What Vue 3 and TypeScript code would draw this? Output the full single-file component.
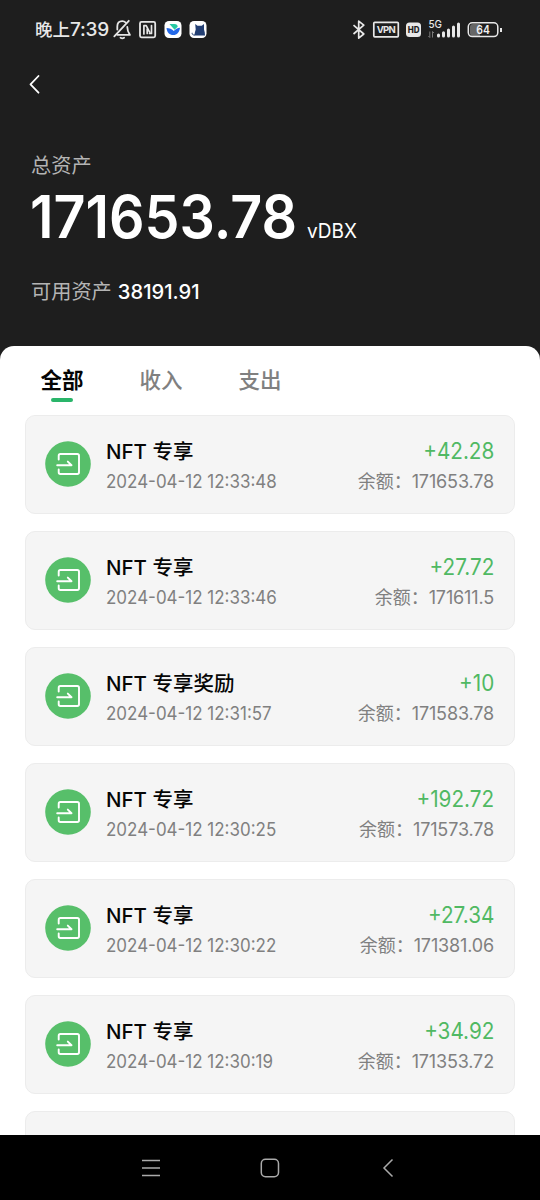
<script setup lang="ts">
interface Entry {
  title: string
  time: string
  amount: string
  balance: string
}

const tabs: string[] = ['全部', '收入', '支出']

const entries: Entry[] = [
  { title: 'NFT 专享', time: '2024-04-12 12:33:48', amount: '+42.28', balance: '171653.78' },
  { title: 'NFT 专享', time: '2024-04-12 12:33:46', amount: '+27.72', balance: '171611.5' },
  { title: 'NFT 专享奖励', time: '2024-04-12 12:31:57', amount: '+10', balance: '171583.78' },
  { title: 'NFT 专享', time: '2024-04-12 12:30:25', amount: '+192.72', balance: '171573.78' },
  { title: 'NFT 专享', time: '2024-04-12 12:30:22', amount: '+27.34', balance: '171381.06' },
  { title: 'NFT 专享', time: '2024-04-12 12:30:19', amount: '+34.92', balance: '171353.72' },
]
</script>

<template>
  <div class="screen">
    <header class="top">
      <div class="status">
        <span class="clock">晚上<b>7:39</b></span>
        <svg class="tray" width="96" height="24" viewBox="112 18 96 24" fill="none">
          <g stroke="#e6e6e6" stroke-width="1.8" stroke-linecap="round" stroke-linejoin="round">
            <path d="M125.800 22.600c-1-.9-2.200-1.400-3.500-1.400-3.200 0-5 2.300-5 5.300v3M127.300 27c0 3.500.700 5.300 2.600 7.900H117.500" />
            <path d="M128.800 20.800 114.300 36.300" />
            <path d="M120.500 37.800q1.800 1 3.600 0" />
            <rect x="140" y="21.900" width="15.200" height="15.400" rx="1.500" />
            <path d="M143.900 34v-8.300h2.300l3.400 6.500M147.200 33.500v-4.500M151.500 25.500v8h-2" stroke-width="1.700" />
          </g>
          <rect x="164.500" y="21" width="17" height="17" rx="4.500" fill="#fff" />
          <path d="M169.500 24h5c2 0 3.200 1.200 3.200 2.800l-3.200 3z" fill="#28c9a4" />
          <path d="M166.500 28c3 0 5.500 1 7.300 3 1.700-2 3.700-3 6.200-3.300-.5 4.500-3 7.300-6.700 7.300-3.800 0-6.300-2.500-6.800-7z" fill="#2469e8" />
          <rect x="189.500" y="21" width="17" height="17" rx="4.500" fill="#fff" />
          <path d="M194.500 35.500c.2-3 .8-4.500 1.200-6l-.5-5.500 2.300 1.800h4.200l2.300-1.800v5.500c.7 2 1 4 1 6z" fill="#233f73" />
          <path d="M195 35c-2 .3-3.200-.7-2.800-2.200" stroke="#233f73" />
        </svg>
        <svg class="radio" width="156" height="28" viewBox="350 16 156 28" fill="none">
          <path d="m353.500 25.200 10.300 8.800-5.100 4.100V21.200l5.100 4-10.300 8.800" stroke="#e8e8e8" stroke-width="1.700" stroke-linejoin="round" />
          <rect x="373.800" y="22.300" width="24.500" height="14.500" rx="1" stroke="#e8e8e8" stroke-width="1.700" />
          <text x="376.700" y="33.100" font-size="9.500" font-weight="700" textLength="19" fill="#e8e8e8">VPN</text>
          <rect x="406" y="22.500" width="15" height="14.500" rx="3.500" fill="#e8e8e8" />
          <text x="407.700" y="33" font-size="8.500" font-weight="800" textLength="11.800" lengthAdjust="spacingAndGlyphs" fill="#1e1e1e">HD</text>
          <text x="428.500" y="27.500" font-size="10.500" font-weight="500" textLength="13.500" lengthAdjust="spacingAndGlyphs" fill="#e8e8e8">5G</text>
          <path d="M429.800 31.500v6l-1.500-1.500M432.500 37.500v-6l1.500 1.500" stroke="#777" />
          <path d="M438.500 35v1M443.500 32.800v3.200M448.500 30v6M453.500 27v9M458.500 24v12" stroke="#e8e8e8" stroke-width="3" stroke-linecap="round" />
          <path d="M473 24h7v12h-7q-3 0-3-3v-6q0-3 3-3z" fill="#666" />
          <rect x="468.300" y="22.800" width="29.500" height="13.800" rx="4" stroke="#e8e8e8" stroke-width="1.500" />
          <path d="M501 28v4" stroke="#e8e8e8" stroke-width="2" />
          <text x="476.300" y="34" font-size="12" font-weight="600" textLength="13.500" lengthAdjust="spacingAndGlyphs" fill="#f2f2f2">64</text>
        </svg>
      </div>
      <svg class="back" width="14" height="22" viewBox="0 0 14 22" fill="none">
        <path d="M11.500 3 3.500 11.300 11.500 19.700" stroke="#fff" stroke-width="1.800" stroke-linecap="round" stroke-linejoin="round" />
      </svg>
      <div class="label">总资产</div>
      <div class="total"><strong>171653.78</strong><span>vDBX</span></div>
      <div class="available">可用资产<b>38191.91</b></div>
    </header>

    <main class="sheet">
      <nav class="tabs">
        <span v-for="(tab, i) in tabs" :key="tab" class="tab" :class="{ active: i === 0 }">{{ tab }}</span>
      </nav>
      <div class="list">
        <article v-for="entry in entries" :key="entry.time" class="card">
          <svg class="badge" width="46" height="46" viewBox="0 0 46 46" fill="none">
            <circle cx="23" cy="23" r="22.800" fill="#57bf6a" />
            <path d="M13.700 18.500V14.700q0-1.700 1.700-1.700h16.900q1.700 0 1.700 1.700v16.600q0 1.700-1.700 1.700H15.400q-1.700 0-1.700-1.700V28.500M12.200 24.200H26.500L22.800 20.600" stroke="#fff" stroke-width="1.900" stroke-linecap="round" stroke-linejoin="round" />
          </svg>
          <div class="info">
            <div class="title">{{ entry.title }}</div>
            <div class="time">{{ entry.time }}</div>
          </div>
          <div class="sums">
            <div class="amount">{{ entry.amount }}</div>
            <div class="balance">余额：<span>{{ entry.balance }}</span></div>
          </div>
        </article>
        <article class="card"></article>
      </div>
    </main>

    <footer class="navbar">
      <svg width="20" height="20" viewBox="0 0 20 20"><path d="M1 2.500h18M1 10h18M1 17.500h18" stroke="#aaa" stroke-width="1.500" /></svg>
      <svg width="20" height="20" viewBox="0 0 20 20"><rect x="1.300" y="1.300" width="17.200" height="17.400" rx="4.200" fill="none" stroke="#aaa" stroke-width="1.500" /></svg>
      <svg width="20" height="20" viewBox="0 0 20 20"><path d="m13.500 1.500-8.500 8.500 8.500 8.500" fill="none" stroke="#aaa" stroke-width="1.500" /></svg>
    </footer>
  </div>
</template>

<style>
body {
  margin: 0;
  background: #000;
}
</style>

<style scoped>
.screen {
  width: 540px;
  height: 1200px;
  display: flex;
  flex-direction: column;
  overflow: hidden;
  background: #1e1e1e;
  font-family: Inter, "Noto Sans CJK SC", sans-serif;
  white-space: nowrap;
}
.top {
  height: 346px;
  flex: none;
  color: #fff;
}
.status {
  display: flex;
  align-items: center;
  height: 60px;
  padding: 0 34px 0 35px;
}
.clock {
  width: 77px;
  font-size: 17.5px;
  font-weight: 500;
  line-height: 60px;
  color: #e8e8e8;
}
.clock b {
  font-size: 19px;
  font-weight: 500;
  letter-spacing: -0.2px;
}
.tray {
  flex: none;
}
.radio {
  flex: none;
  margin-left: auto;
}
.back {
  display: block;
  margin: 13px 0 0 27px;
}
.label {
  margin: 56px 0 0 31px;
  font-size: 20.2px;
  line-height: 30px;
  color: #b4b4b4;
}
.total {
  display: flex;
  align-items: baseline;
  height: 72px;
  margin-left: 30px;
  line-height: 71px;
}
.total strong {
  width: 277px;
  font-size: 59px;
  font-weight: 600;
  transform: scaleX(0.942);
  transform-origin: left;
}
.total span {
  font-size: 20px;
  transform: scaleX(0.95);
  transform-origin: left;
}
.available {
  display: flex;
  margin: 23px 0 0 31px;
  font-size: 20.2px;
  line-height: 32px;
  color: #b4b4b4;
}
.available b {
  margin-left: 6px;
  font-weight: 500;
  color: #fff;
}
.sheet {
  flex: none;
  height: 789px;
  overflow: hidden;
  border-radius: 14px 14px 0 0;
  background: #fff;
}
.tabs {
  display: flex;
  gap: 55px;
  height: 69px;
  padding-left: 40px;
}
.tab {
  display: flex;
  flex-direction: column;
  align-items: center;
  width: 44px;
  font-size: 21.5px;
  font-weight: 500;
  line-height: 68px;
  height: 69px;
  color: #808080;
}
.active {
  font-weight: 700;
  color: #050505;
}
.active::after {
  content: "";
  width: 22px;
  height: 4px;
  margin-top: -16px;
  border-radius: 2px;
  background: #2ab56a;
}
.list {
  display: flex;
  flex-direction: column;
  gap: 17px;
  padding: 0 25px;
}
.card {
  box-sizing: border-box;
  display: flex;
  flex: none;
  height: 99px;
  padding: 20px 20px 0;
  border: 1px solid #ececec;
  border-radius: 10px;
  background: #f5f5f5;
}
.badge {
  flex: none;
  margin: 5px 15px 0 -1px;
}
.info {
  flex: 1;
}
.title {
  font-size: 20.5px;
  font-weight: 500;
  line-height: 31px;
  color: #060606;
}
.time {
  font-size: 18.5px;
  line-height: 28px;
  color: #808080;
  transform: scaleX(0.917);
  transform-origin: left;
}
.sums {
  text-align: right;
}
.amount {
  font-size: 23px;
  line-height: 31px;
  color: #50b963;
  transform: scaleX(0.9);
  transform-origin: right;
}
.balance {
  font-size: 18px;
  line-height: 29px;
  color: #808080;
}
.balance span {
  letter-spacing: -0.15px;
}
.navbar {
  display: flex;
  flex: none;
  justify-content: space-between;
  align-items: center;
  height: 65px;
  padding: 0 141px;
  background: #000;
}
</style>
